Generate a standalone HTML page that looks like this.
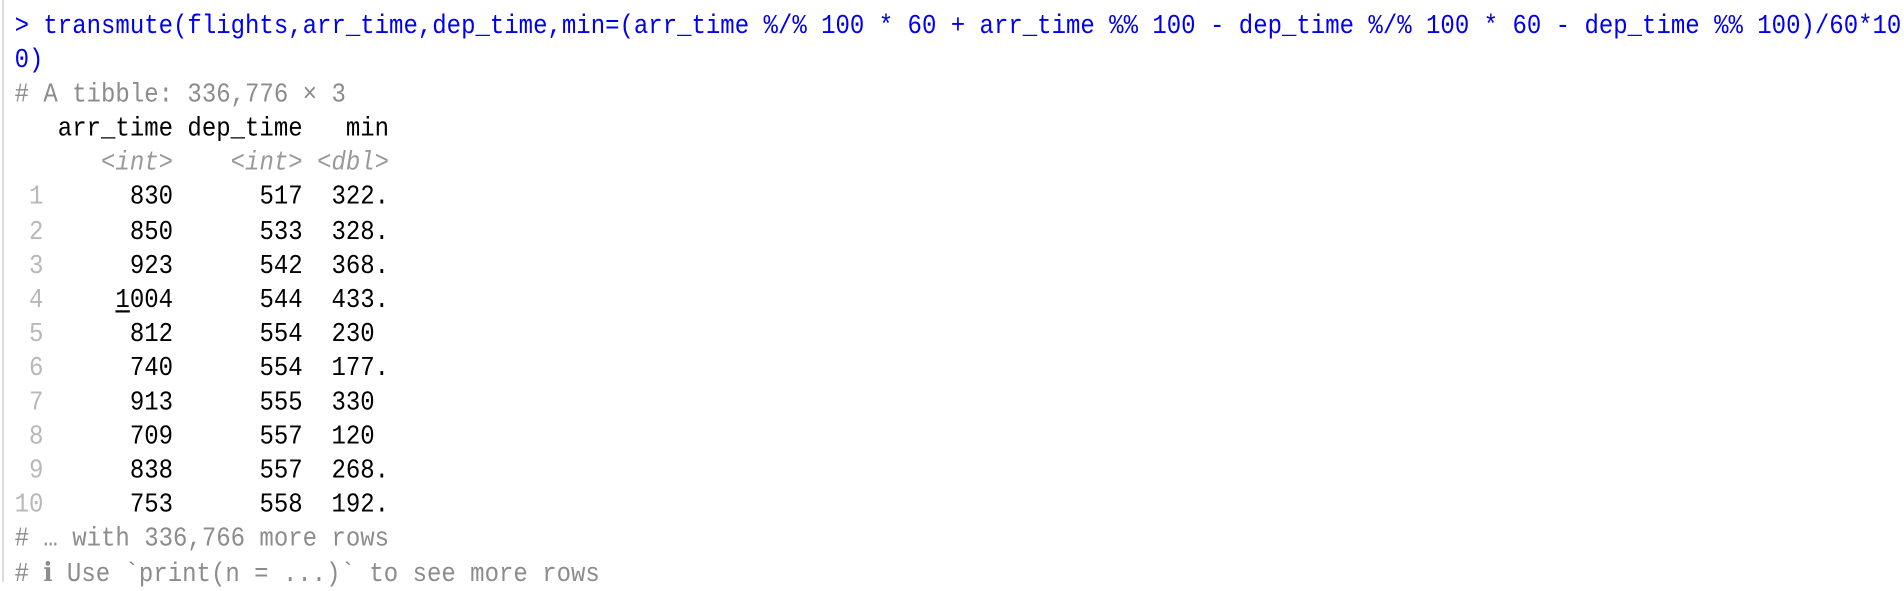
<!DOCTYPE html>
<html><head><meta charset="utf-8"><style>
html,body{margin:0;padding:0;background:#fff;width:1904px;height:582px;overflow:hidden}
.bar{position:absolute;left:2px;top:0;width:2px;height:582px;background:#dcdcdc}
pre{position:absolute;left:14.6px;top:10px;margin:0;font-family:"Liberation Mono","DejaVu Sans Mono",monospace;font-size:24px;line-height:31.09px;color:#000;white-space:pre;transform:scale(1,1.1);transform-origin:0 0}
.c{color:#0000ee}
.g{color:#8c8c8c}
.r{color:#b8b8b8}
.t{color:#999;font-style:italic}
u{text-decoration:underline;text-underline-offset:3px}
</style></head><body><div class="bar"></div><pre><span class="c">&gt; transmute(flights,arr_time,dep_time,min=(arr_time %/% 100 * 60 + arr_time %% 100 - dep_time %/% 100 * 60 - dep_time %% 100)/60*10
0)</span>
<span class="g"># A tibble: 336,776 × 3</span>
   arr_time dep_time   min
      <span class="t">&lt;int&gt;</span>    <span class="t">&lt;int&gt;</span> <span class="t">&lt;dbl&gt;</span>
<span class="r"> 1</span>      830      517  322.
<span class="r"> 2</span>      850      533  328.
<span class="r"> 3</span>      923      542  368.
<span class="r"> 4</span>     <u>1</u>004      544  433.
<span class="r"> 5</span>      812      554  230 
<span class="r"> 6</span>      740      554  177.
<span class="r"> 7</span>      913      555  330 
<span class="r"> 8</span>      709      557  120 
<span class="r"> 9</span>      838      557  268.
<span class="r">10</span>      753      558  192.
<span class="g"># … with 336,766 more rows</span>
<span class="g"># ℹ Use `print(n = ...)` to see more rows</span></pre></body></html>
